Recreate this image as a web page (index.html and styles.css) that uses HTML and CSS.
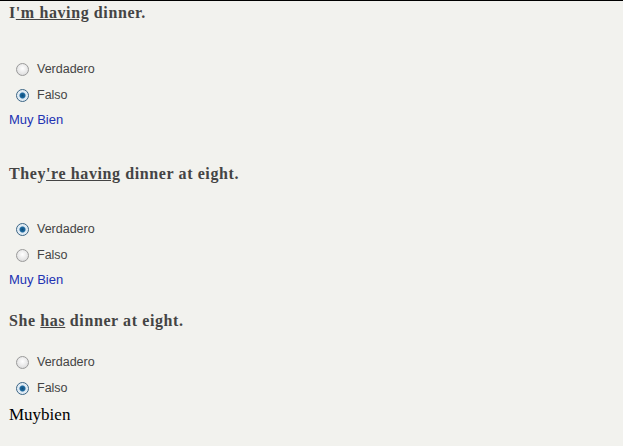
FILE: index.html
```html
<!DOCTYPE html>
<html lang="es">
<head>
    <meta charset="UTF-8">
    <title>Quiz</title>
    <link rel="stylesheet" href="styles.css">
</head>
<body>
    <div class="quiz">
        <section class="question q1">
            <h2>I<u>'m having</u> dinner.</h2>
            <div class="options">
                <label class="option"><input type="radio" name="q1"> Verdadero</label>
                <label class="option"><input type="radio" name="q1" checked> Falso</label>
            </div>
            <p class="feedback">Muy Bien</p>
        </section>
        <section class="question q2">
            <h2>They<u>'re having</u> dinner at eight.</h2>
            <div class="options">
                <label class="option"><input type="radio" name="q2" checked> Verdadero</label>
                <label class="option"><input type="radio" name="q2"> Falso</label>
            </div>
            <p class="feedback">Muy Bien</p>
        </section>
        <section class="question q3">
            <h2>She <u>has</u> dinner at eight.</h2>
            <div class="options">
                <label class="option"><input type="radio" name="q3"> Verdadero</label>
                <label class="option"><input type="radio" name="q3" checked> Falso</label>
            </div>
            <p class="plain">Muybien</p>
        </section>
    </div>
</body>
</html>
```
FILE: styles.css
```css
body {
    margin: 0;
    border-top: 1px solid #000;
    background-color: #f2f2ee;
    font-family: 'Liberation Sans', Arial, sans-serif;
    color: #444;
}

.quiz {
    padding: 2px 8px 0 9px;
}

.question h2 {
    margin: 0;
    font-family: 'Liberation Serif', serif;
    font-size: 16px;
    line-height: 20px;
    letter-spacing: 0.6px;
    font-weight: bold;
    color: #444;
}

.q2 {
    margin-top: 36px;
}

.q3 {
    margin-top: 23px;
}

.options {
    margin-top: 33px;
    padding-left: 7px;
}

.q2 .options {
    margin-top: 32px;
}

.q3 .options {
    margin-top: 18px;
}

.option {
    display: flex;
    align-items: center;
    height: 26px;
    font-size: 12.5px;
    color: #444;
}

.option input {
    appearance: none;
    -webkit-appearance: none;
    width: 13px;
    height: 13px;
    margin: 0 8px 0 0;
    border: 1px solid #9a9a9a;
    border-radius: 50%;
    background: radial-gradient(circle at 50% 40%, #fff 0%, #e6e6e6 60%, #cfcfcf 100%);
    box-sizing: border-box;
}

.option input:checked {
    border-color: #3b6585;
    background: radial-gradient(circle, #0f4d7a 0, #1d6aa0 2.5px, #dbe8f2 3.5px, #f2f6fa 100%);
}

.feedback {
    margin: 4px 0 0;
    font-size: 13px;
    line-height: 16px;
    color: #2233b3;
}

.plain {
    margin: 5px 0 0;
    font-family: 'Liberation Serif', serif;
    font-size: 17px;
    line-height: 18px;
    color: #000;
}
```
